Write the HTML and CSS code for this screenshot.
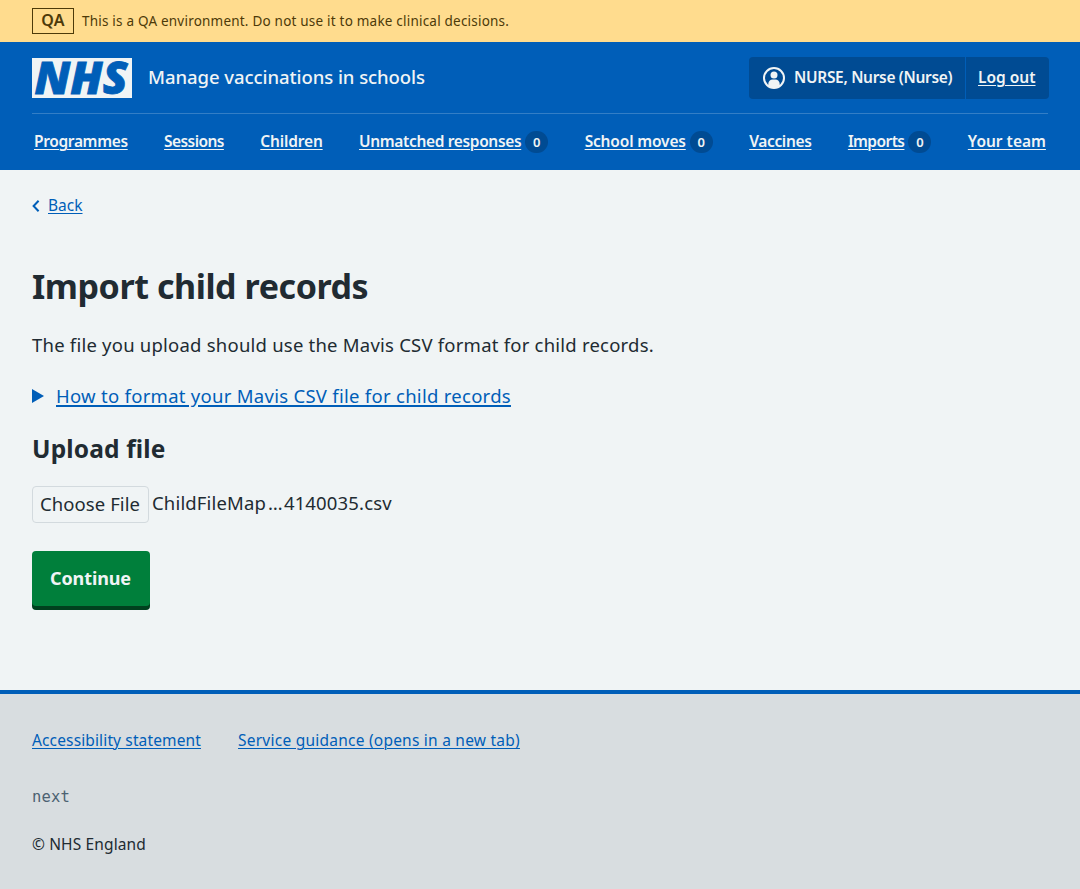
FILE: index.html
```html
<!DOCTYPE html>
<html lang="en">
<head>
<meta charset="utf-8">
<title>Import child records</title>
<link rel="stylesheet" href="styles.css">
</head>
<body>
<div class="env"><strong class="env-tag">QA</strong><span class="env-text">This is a QA environment. Do not use it to make clinical decisions.</span></div>
<header class="header">
  <div class="header-top">
    <svg class="logo" viewBox="0 0 100 40" width="100" height="40" role="img" aria-label="NHS"><rect width="100" height="40" fill="#f0f4f5"/><text class="logo-text" x="2.5" y="36" textLength="93" lengthAdjust="spacingAndGlyphs">NHS</text></svg>
    <a class="service">Manage vaccinations in schools</a>
    <div class="account">
      <div class="account-user"><svg class="user-icon" viewBox="0 0 24 24" width="24" height="24"><circle cx="12" cy="12" r="10" fill="none" stroke="currentColor" stroke-width="2"/><circle cx="12" cy="9" r="3.5" fill="currentColor"/><path d="M6.3 20.2v-2.4a4.3 4.3 0 0 1 4.3-4.3h2.8a4.3 4.3 0 0 1 4.3 4.3v2.4A10 10 0 0 1 12 22a10 10 0 0 1-5.7-1.8z" fill="currentColor"/></svg><span class="user-name">NURSE, Nurse (Nurse)</span></div>
      <div class="account-out"><a class="link-w">Log out</a></div>
    </div>
  </div>
  <nav class="nav">
    <div class="nav-item"><a class="link-w snug">Programmes</a></div>
    <div class="nav-item"><a class="link-w snugger">Sessions</a></div>
    <div class="nav-item"><a class="link-w near">Children</a></div>
    <div class="nav-item"><a class="link-w snug">Unmatched responses</a><span class="count">0</span></div>
    <div class="nav-item"><a class="link-w near">School moves</a><span class="count">0</span></div>
    <div class="nav-item"><a class="link-w snug">Vaccines</a></div>
    <div class="nav-item"><a class="link-w snugger">Imports</a><span class="count">0</span></div>
    <div class="nav-item"><a class="link-w">Your team</a></div>
  </nav>
</header>
<main class="main">
  <div class="back"><svg class="chev" viewBox="0 0 8 12" width="8" height="12"><path d="M6.6.8 1.6 6l5 5.2" fill="none" stroke="currentColor" stroke-width="2"/></svg><a class="link back-link">Back</a></div>
  <h1 class="title">Import child records</h1>
  <p class="lead">The file you upload should use the Mavis CSV format for child records.</p>
  <div class="details"><svg class="tri" viewBox="0 0 12 14" width="12" height="14"><path d="M0 0l12 7-12 7z" fill="currentColor"/></svg><a class="link details-link">How to format your Mavis CSV file for child records</a></div>
  <h2 class="subtitle">Upload file</h2>
  <div class="upload"><button class="choose">Choose File</button><span class="filename">ChildFileMap<span class="dots">…</span>4140035.csv</span></div>
  <button class="continue">Continue</button>
</main>
<footer class="footer">
  <div class="footer-links"><a class="link f1">Accessibility statement</a><a class="link f2">Service guidance (opens in a new tab)</a></div>
  <div class="version">next</div>
  <div class="copy">© NHS England</div>
</footer>
</body>
</html>
```
FILE: styles.css
```css
* { box-sizing: border-box; }
body {
  margin: 0;
  min-height: 889px;
  display: flex;
  flex-direction: column;
  background: #f0f4f5;
  color: #212b32;
  font-family: "Noto Sans", sans-serif;
  font-size: 18.5px;
}
.env {
  display: flex;
  align-items: center;
  gap: 8px;
  height: 42px;
  padding: 0 32px;
  background: #ffdc8e;
  color: #4d3a09;
}
.env-tag {
  display: flex;
  align-items: center;
  justify-content: center;
  width: 42px;
  height: 26px;
  padding-bottom: 2px;
  border: 1px solid #4d3a09;
  font-size: 16px;
  font-weight: 600;
  letter-spacing: 0.3px;
}
.env-text { font-size: 13.5px; letter-spacing: 0.21px; }
.header {
  height: 128px;
  padding: 0 32px;
  background: #005eb8;
  color: #f0f4f5;
}
.header-top {
  display: flex;
  align-items: center;
  height: 72px;
  border-bottom: 1px solid #337ec6;
}
.logo { display: block; overflow: visible; }
.logo-text {
  font: italic 800 45px "Open Sans", sans-serif;
  fill: #005eb8;
  stroke: #005eb8;
  stroke-width: 0.8;
}
.service {
  margin-left: 16px;
  padding-bottom: 2px;
  font-size: 18.5px;
  font-weight: 500;
  letter-spacing: -0.06px;
}
.account {
  display: flex;
  height: 42px;
  margin-left: auto;
  margin-right: -1px;
  border-radius: 4px;
  background: #004b93;
  font-size: 15.5px;
  font-weight: 600;
}
.account-user {
  display: flex;
  align-items: center;
  gap: 8px;
  width: 217px;
  padding-left: 13px;
  border-right: 1px solid #005eb8;
}
.user-name { padding-bottom: 2px; letter-spacing: -0.32px; white-space: nowrap; }
.account-out {
  display: flex;
  align-items: center;
  width: 83px;
  padding: 0 0 2px 12px;
}
.link-w {
  text-decoration: underline;
  text-decoration-thickness: 1px;
  text-underline-offset: 2px;
}
.nav {
  display: flex;
  justify-content: space-between;
  height: 56px;
  padding: 0 2px;
  font-size: 15.5px;
  font-weight: 600;
}
.nav .link-w { padding-bottom: 2px; }
.near { letter-spacing: -0.16px; }
.snug { letter-spacing: -0.35px; }
.snugger { letter-spacing: -0.57px; }
.nav-item { display: flex; align-items: center; }
.count {
  width: 23px;
  height: 22px;
  margin-left: 4px;
  border-radius: 11px;
  background: #004b93;
  font-size: 13px;
  font-weight: 600;
  line-height: 22px;
  text-align: center;
}
.main { height: 520px; padding: 24px 32px 0; }
.back {
  display: flex;
  align-items: center;
  gap: 8px;
  height: 24px;
  color: #005eb8;
  font-size: 15.5px;
}
.back-link { padding-bottom: 2px; }
.link {
  color: #005eb8;
  text-decoration: underline;
  text-decoration-thickness: 1px;
  text-underline-offset: 2px;
}
.title {
  margin: 43px 0 0;
  font-size: 34px;
  font-weight: 700;
  line-height: 50px;
  letter-spacing: -0.43px;
}
.lead { margin: 20px 0 0; line-height: 28px; letter-spacing: 0.22px; }
.details {
  display: flex;
  align-items: center;
  gap: 12px;
  height: 28px;
  margin-top: 23px;
  color: #005eb8;
}
.details-link { padding-bottom: 2px; letter-spacing: 0.28px; text-decoration-thickness: 1.5px; }
.subtitle {
  margin: 21px 0 0;
  font-size: 24.5px;
  font-weight: 700;
  line-height: 36px;
  letter-spacing: 0.15px;
}
.upload {
  display: flex;
  gap: 3px;
  height: 37px;
  margin-top: 19px;
  line-height: 33px;
}
.filename { letter-spacing: 0.16px; }
.dots { margin: 0 1px 0 2px; }
.choose {
  width: 117px;
  height: 37px;
  padding: 0 0 2px 7px;
  border: 1px solid #d3dade;
  border-radius: 4px;
  background: transparent;
  color: inherit;
  font: inherit;
  letter-spacing: 0.08px;
  text-align: left;
}
.continue {
  display: block;
  width: 118px;
  height: 55px;
  margin-top: 28px;
  padding: 0 1px 2px 0;
  border: 0;
  border-radius: 4px;
  background: #007f3b;
  box-shadow: 0 4px 0 #00401e;
  color: #f0f4f5;
  font: 700 18px "Noto Sans", sans-serif;
  letter-spacing: -0.1px;
}
.footer {
  flex: 1;
  padding: 34px 32px 0;
  border-top: 4px solid #005eb8;
  background: #d8dde0;
  font-size: 15.5px;
}
.footer-links { display: flex; gap: 37px; line-height: 24px; }
.f1 { letter-spacing: 0.135px; }
.f2 { letter-spacing: 0.235px; }
.version {
  margin-top: 33px;
  color: #4c6272;
  font-family: "DejaVu Sans Mono", monospace;
  letter-spacing: 0.17px;
  line-height: 24px;
}
.copy { margin-top: 23px; line-height: 24px; letter-spacing: 0.13px; }
```
